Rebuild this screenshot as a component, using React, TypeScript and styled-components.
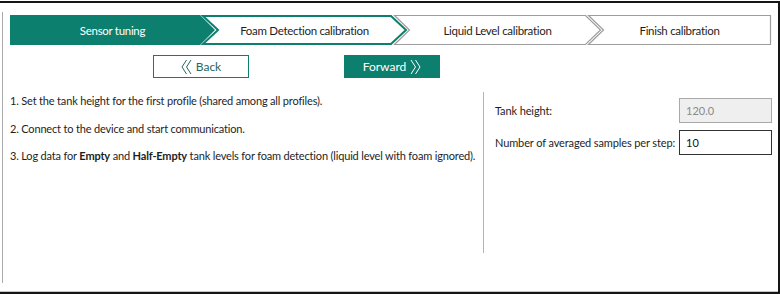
import React from "react";
import styled, {createGlobalStyle, css} from "styled-components";

const TEAL = "#0d7f6e";
const FONT = `Lato, "Open Sans", sans-serif`;

const Global = createGlobalStyle`
    html, body {
        margin: 0;
        background: #fff;
    }
    body {
        font-family: ${FONT};
        color: #1e1e1e;
    }
`;

const Frame = styled.div`
    box-sizing: border-box;
    width: 780px;
    height: 293px;
    margin-top: 1px;
    border-top: 2px solid #151515;
    border-right: 2px solid #151515;
    border-bottom: 2px solid #151515;
    box-shadow: inset 0 -1px 0 #c4c4c4;
    padding-left: 2px;
`;

const Panel = styled.div`
    box-sizing: border-box;
    height: 271px;
    margin-top: 9px;
    border-left: 1px solid #aaa;
    display: flex;
    flex-direction: column;
`;

const Stepper = styled.div`
    display: flex;
    margin: 3px 0 0 7px;
    height: 30px;
`;

type StepState = "done" | "active" | "todo";

const Step = styled.div<{$w: number}>`
    position: relative;
    flex: none;
    width: ${(p) => p.$w}px;
    height: 30px;
    & + & {
        margin-left: -13px;
    }
`;

const StepShape = styled.svg`
    position: absolute;
    inset: 0;
    width: 100%;
    height: 100%;
    overflow: visible;
`;

const StepLabel = styled.div<{$state: StepState}>`
    position: relative;
    display: flex;
    align-items: center;
    justify-content: center;
    height: 100%;
    font-size: 11.5px;
    letter-spacing: -0.3px;
    color: ${(p) => (p.$state === "done" ? "#fff" : "#1e1e1e")};
`;

const ButtonRow = styled.div`
    display: flex;
    gap: 95px;
    margin: 10px 0 0 150px;
`;

const NavButton = styled.div<{$primary?: boolean}>`
    box-sizing: border-box;
    width: 96px;
    height: 23px;
    display: flex;
    align-items: center;
    justify-content: center;
    gap: 4px;
    font-size: 12px;
    ${(p) =>
        p.$primary
            ? css`
                  background: ${TEAL};
                  color: #fff;
              `
            : css`
                  background: #fff;
                  color: #25675f;
                  border: 1px solid ${TEAL};
              `}
`;

const Body = styled.div`
    display: flex;
    margin-top: 14px;
    height: 161px;
`;

const Instructions = styled.div`
    box-sizing: border-box;
    width: 481px;
    padding: 1px 0 0 7px;
    border-right: 1px solid #b5b5b5;
    display: flex;
    flex-direction: column;
    gap: 11.5px;
`;

const Instruction = styled.div`
    font-size: 11px;
    line-height: 16px;
    letter-spacing: -0.17px;
    white-space: nowrap;
    b {
        font-weight: 700;
    }
`;

const Settings = styled.div`
    display: grid;
    grid-template-columns: 184px 93px;
    grid-auto-rows: 25px;
    row-gap: 7px;
    align-items: center;
    align-content: start;
    padding: 6px 0 0 11px;
`;

const FieldLabel = styled.label`
    font-size: 11px;
    letter-spacing: -0.12px;
    white-space: nowrap;
`;

const ValueBox = styled.input`
    box-sizing: border-box;
    width: 93px;
    height: 25px;
    padding: 0 6px;
    font-family: ${FONT};
    font-size: 11px;
    color: #111;
    background: #fff;
    border: 1px solid #333;
    border-radius: 0;
    outline: none;
    &:disabled {
        color: #8a8a8a;
        background: #efefef;
        border-color: #a8a8a8;
    }
`;

const DoubleChevron = ({dir}: {dir: "left" | "right"}) => (
    <svg width="11" height="16" viewBox="0 0 11 16" fill="none" stroke="currentColor" strokeWidth="1">
        {dir === "left" ? (
            <>
                <polyline points="5.5,1 1,8 5.5,15" />
                <polyline points="10,1 5.5,8 10,15" />
            </>
        ) : (
            <>
                <polyline points="1,1 5.5,8 1,15" />
                <polyline points="5.5,1 10,8 5.5,15" />
            </>
        )}
    </svg>
);

const steps: {label: string; state: StepState; w: number}[] = [
    {label: "Sensor tuning", state: "done", w: 205},
    {label: "Foam Detection calibration", state: "active", w: 205},
    {label: "Liquid Level calibration", state: "todo", w: 207},
    {label: "Finish calibration", state: "todo", w: 183},
];

const D = 15;

function shape(w: number, first: boolean, last: boolean, i: number) {
    const pts: string[] = [];
    pts.push(`${i},${i}`);
    if (last) {
        pts.push(`${w - i},${i}`, `${w - i},${30 - i}`);
    } else {
        pts.push(`${w - D - i},${i}`, `${w - i},15`, `${w - D - i},${30 - i}`);
    }
    pts.push(`${i},${30 - i}`);
    if (!first) pts.push(`${D + i},15`);
    return pts.join(" ");
}

export default function App() {
    return (
        <>
            <Global />
            <Frame>
                <Panel>
                    <Stepper>
                        {steps.map((s, idx) => {
                            const first = idx === 0;
                            const last = idx === steps.length - 1;
                            return (
                                <Step key={s.label} $w={s.w}>
                                    <StepShape viewBox={`0 0 ${s.w} 30`}>
                                        {s.state === "done" && (
                                            <polygon points={shape(s.w, first, last, 0)} fill={TEAL} />
                                        )}
                                        {s.state === "active" && (
                                            <polygon
                                                points={shape(s.w, first, last, 1)}
                                                fill="#fff"
                                                stroke={TEAL}
                                                strokeWidth="2"
                                            />
                                        )}
                                        {s.state === "todo" && (
                                            <polygon
                                                points={shape(s.w, first, last, 0.5)}
                                                fill="#fff"
                                                stroke="#9d9d9d"
                                                strokeWidth="1.2"
                                            />
                                        )}
                                    </StepShape>
                                    <StepLabel $state={s.state}>{s.label}</StepLabel>
                                </Step>
                            );
                        })}
                    </Stepper>
                    <ButtonRow>
                        <NavButton>
                            <DoubleChevron dir="left" />
                            Back
                        </NavButton>
                        <NavButton $primary>
                            Forward
                            <DoubleChevron dir="right" />
                        </NavButton>
                    </ButtonRow>
                    <Body>
                        <Instructions>
                            <Instruction>1. Set the tank height for the first profile (shared among all profiles).</Instruction>
                            <Instruction>2. Connect to the device and start communication.</Instruction>
                            <Instruction>
                                3. Log data for <b>Empty</b> and <b>Half-Empty</b> tank levels for foam detection (liquid
                                level with foam ignored).
                            </Instruction>
                        </Instructions>
                        <Settings>
                            <FieldLabel>Tank height:</FieldLabel>
                            <ValueBox disabled value="120.0" readOnly />
                            <FieldLabel>Number of averaged samples per step:</FieldLabel>
                            <ValueBox value="10" readOnly />
                        </Settings>
                    </Body>
                </Panel>
            </Frame>
        </>
    );
}
